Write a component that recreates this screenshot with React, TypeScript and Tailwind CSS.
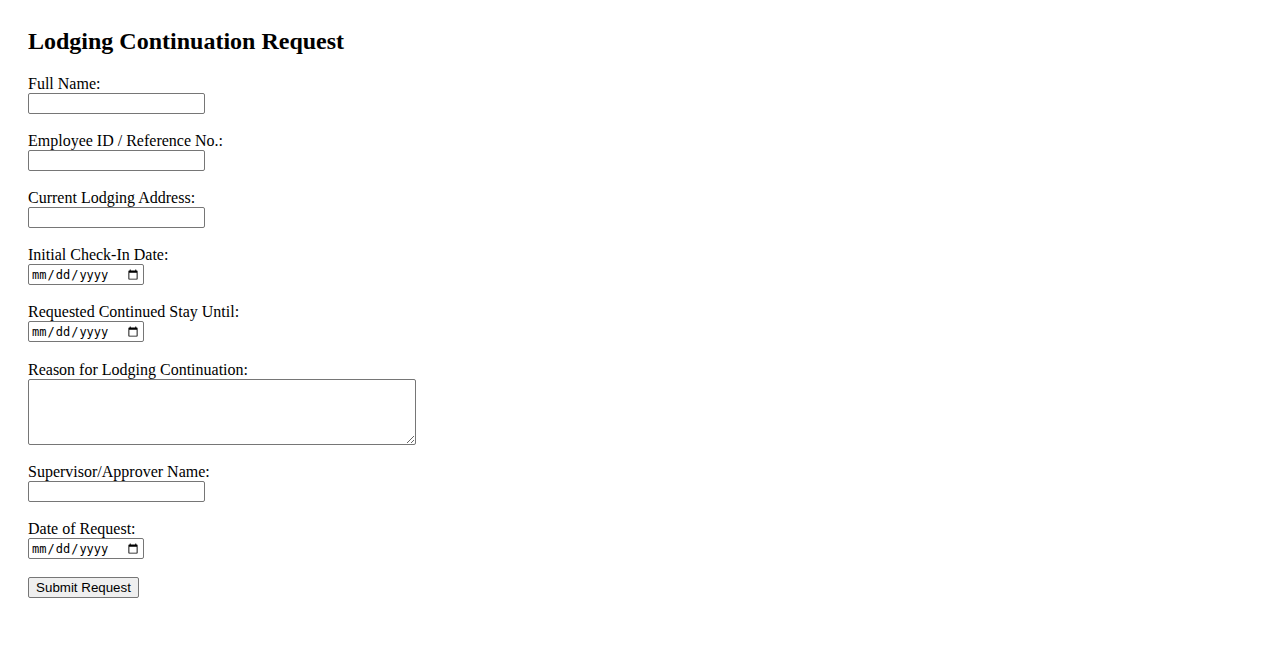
import React from 'react';

const textFields = [
  { id: 'fullName', label: 'Full Name:', type: 'text' },
  { id: 'employeeId', label: 'Employee ID / Reference No.:', type: 'text' },
  { id: 'address', label: 'Current Lodging Address:', type: 'text' },
  { id: 'checkIn', label: 'Initial Check-In Date:', type: 'date' },
  { id: 'stayUntil', label: 'Requested Continued Stay Until:', type: 'date' },
];

const inputBase = 'block h-[21px] border border-[#767676] rounded-[2px] bg-white px-[2px] text-black';

function Field({ id, label, type }: { id: string; label: string; type: string }) {
  return (
    <div className="mb-[18px]">
      <label htmlFor={id} className="block leading-[18px]">
        {label}
      </label>
      {type === 'date' ? (
        <input
          id={id}
          type="date"
          className={`${inputBase} w-[116px] font-['DejaVu_Sans_Mono',monospace] text-[12px]`}
        />
      ) : (
        <input
          id={id}
          type="text"
          className={`${inputBase} w-[177px] text-[13.33px] font-['Liberation_Sans',Arial,sans-serif]`}
        />
      )}
    </div>
  );
}

export default function App() {
  return (
    <div className="min-h-screen bg-white pl-[28px] pt-[28px] text-[16px] text-black font-['Liberation_Serif','Times_New_Roman',serif]">
      <h2 className="mb-[20px] text-[24px] font-bold leading-[27px]">Lodging Continuation Request</h2>
      <form onSubmit={(e) => e.preventDefault()}>
        {textFields.map((f) => (
          <Field key={f.id} {...f} />
        ))}
        <div className="mb-[18px] pt-[1px]">
          <label htmlFor="reason" className="block leading-[18px]">
            Reason for Lodging Continuation:
          </label>
          <textarea
            id="reason"
            className="block h-[66px] w-[388px] rounded-[2px] border border-[#767676] bg-white px-[2px] text-[13.33px] font-['DejaVu_Sans_Mono',monospace]"
          />
        </div>
        <Field id="approver" label="Supervisor/Approver Name:" type="text" />
        <Field id="requestDate" label="Date of Request:" type="date" />
        <button
          type="submit"
          className="block h-[21px] w-[111px] whitespace-nowrap rounded-[2px] border border-[#767676] bg-[#efefef] px-0 text-[13.33px] leading-[19px] font-['Liberation_Sans',Arial,sans-serif] text-black"
        >
          Submit Request
        </button>
      </form>
    </div>
  );
}
